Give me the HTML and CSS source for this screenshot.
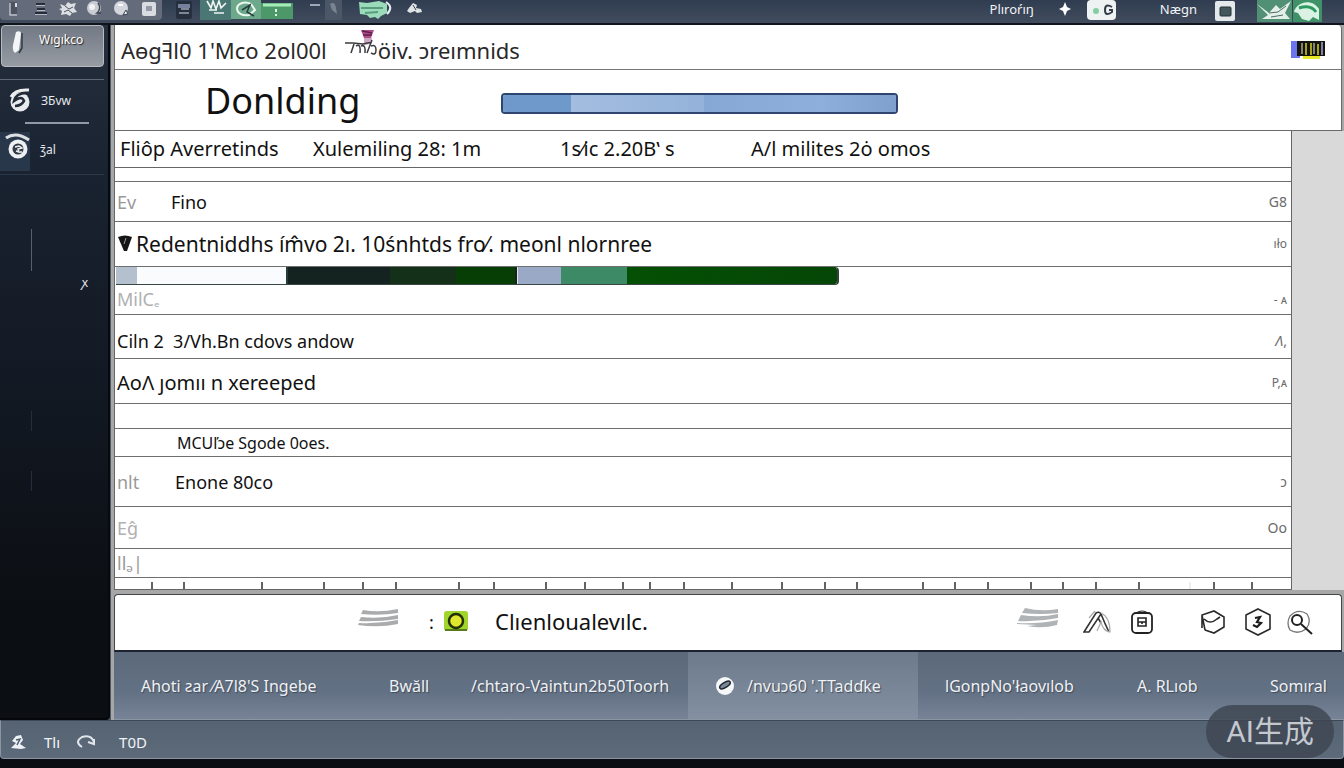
FILE: index.html
```
<!DOCTYPE html>
<html lang="en">
<head>
    <meta charset="UTF-8">
    <meta name="viewport" content="width=device-width, initial-scale=1.0">
    <title>Donlding</title>
    <link rel="stylesheet" href="styles.css">
</head>
<body>
    <header class="topbar">
        <div class="tools">
            <button class="tool" aria-label="Panel"><svg width="12" height="18" viewBox="0 0 12 18"><path d="M2 2h7v12H2z" fill="#4d5361"/><path d="M2 3v12h7" fill="none" stroke="#b9bec8" stroke-width="1.5"/><path d="M7 3h2v4H7z" fill="#d8dbe0"/></svg></button>
            <button class="tool" aria-label="List"><svg width="14" height="18" viewBox="0 0 14 18"><path d="M2 4h9M3 9h8M1 13h12" stroke="#262c38" stroke-width="2"/><path d="M2 5.500h9M3 10.500h8M1 14.500h12" stroke="#b5bac4"/></svg></button>
            <button class="tool" aria-label="Flower"><svg width="20" height="18" viewBox="0 0 20 18"><path d="M2 4l5 2 3-4 3 2 5-1-2 5 3 4-5 1-2 3-4-2-5 1 1-4-3-2 3-1z" fill="#dcdfe3"/><path d="M7 6l4 3 4-2M6 12l4-2 4 3" stroke="#4d5563" fill="none"/></svg></button>
            <button class="tool" aria-label="Disc"><svg width="18" height="18" viewBox="0 0 18 18"><circle cx="8" cy="8" r="7" fill="#c9ccd3"/><path d="M12 3a7 7 0 0 1-1 10h4" fill="none" stroke="#3b4250" stroke-width="1.500"/><circle cx="6" cy="7" r="3" fill="#f1f2f4"/></svg></button>
            <button class="tool" aria-label="Record"><svg width="18" height="18" viewBox="0 0 18 18"><circle cx="8" cy="8" r="7" fill="#d3d6dc"/><path d="M13 10l-3 5 5-1z" fill="#eef0f2" stroke="#3b4250"/><path d="M5 5h5" stroke="#fff" stroke-width="2"/></svg></button>
            <button class="tool" aria-label="Square"><svg width="16" height="18" viewBox="0 0 16 18"><rect x="1" y="2" width="14" height="14" rx="2" fill="#d9dce1"/><rect x="5" y="6" width="6" height="5" fill="#9399a6"/></svg></button>
        </div>
        <button class="tool tool-dark" aria-label="Page"><svg width="18" height="20" viewBox="0 0 18 20"><rect x="1" y="1" width="16" height="18" rx="2" fill="#252f3e"/><path d="M3 4h12v4H3z" fill="#75809a"/><path d="M6 9h8M4 13h10" stroke="#9ba5b5" stroke-width="1.500"/></svg></button>
        <svg class="badges" width="94" height="20" viewBox="0 0 94 20">
            <path d="M0 0h31v20H0z" fill="#4a7773"/><path d="M31 0h30v19H31z" fill="#6ca98b"/><path d="M61 3h32v16H61z" fill="#4d9868"/>
            <path d="M7 1l4 7 2-7 3 8 3-8 2 7 5-5M9 10h8M14 13h10" stroke="#f0f5f2" stroke-width="1.600" fill="none"/>
            <path d="M37 8c1-5 8-7 14-4l4 6-6 5c-6 1-12-1-12-7z" fill="none" stroke="#ecf8ef" stroke-width="2"/><path d="M42 10l8-5-3 7 7 4" fill="none" stroke="#263f3d" stroke-width="1.500"/>
            <path d="M63 5h28" stroke="#a5edb8" stroke-width="3"/><path d="M76 9v3M76 14v2" stroke="#def7e4" stroke-width="2"/>
        </svg>
        <svg class="marks" width="50" height="20" viewBox="0 0 50 20"><path d="M12 5h10" stroke="#9ca8b6" stroke-width="2"/><path d="M27 0h17v20H27z" fill="#4b5667"/><path d="M32 4q5-3 6 4l1 6-5-4z" fill="#7a8491"/></svg>
        <svg class="cloud" width="36" height="20" viewBox="0 0 36 20"><path d="M1 2l8 1 12-2 8 3v9l-6 3-3 3-3-2-5 1-3-3-7-1z" fill="#9adbb9"/><path d="M3 8h22M7 13l13-1" stroke="#5c9c7e" stroke-width="2"/><path d="M28 2q8 5 1 12" stroke="#e9eef2" stroke-width="2" fill="none"/></svg>
        <svg class="puff" width="18" height="18" viewBox="0 0 18 18"><path d="M3 8l4-5 4 2-1 3 5 1 1 3-5 1-2-2-5 2-3-2z" fill="#dfe3e6"/><path d="M7 5l3 5" stroke="#39424e"/></svg>
        <nav class="topnav">
            <a href="#">Plıroŕıŋ</a>
            <svg class="spark" width="12" height="14" viewBox="0 0 12 14"><path d="M6 0l2 5 4 2-4 2-2 5-2-5-4-2 4-2z" fill="#fff"/></svg>
            <button class="chip chip-wide" aria-label="Status"><svg width="29" height="20" viewBox="0 0 29 20"><rect width="29" height="20" rx="4" fill="#eef2f2"/><circle cx="9" cy="11" r="3" fill="#82cfa2"/><path d="M25 7q-7-4-7 3t7 2v-2h-3" fill="none" stroke="#353e48" stroke-width="2"/></svg></button>
            <a href="#">Nægn</a>
            <button class="chip" aria-label="Window"><svg width="20" height="20" viewBox="0 0 20 20"><rect width="20" height="20" rx="2" fill="#e4e8eb"/><rect x="5" y="6" width="11" height="9" rx="1" fill="#43565a" stroke="#273037"/></svg></button>
            <svg class="leaf" width="65" height="22" viewBox="0 0 65 22"><path d="M0 0h35v22H0z" fill="#529075"/><path d="M36 0h29v22H36z" fill="#3f9267"/><path d="M0 4l12 9 7-8 4 4 11-8-6 12 5 6H5l6-4z" fill="#e3efe8"/><path d="M12 13l9-1 8-6M14 17l12-2" stroke="#4b6d60" fill="none"/><path d="M37 12c2-9 17-15 25-3v11l-6-3-4 4-7-2-4-6z" fill="#d9f2e4"/><path d="M42 8q12-4 17 4" stroke="#2c9960" stroke-width="3" fill="none"/></svg>
        </nav>
    </header>

    <div class="workspace">
        <aside class="sidebar">
            <a class="side-item side-active" href="#">
                <svg width="16" height="26" viewBox="0 0 16 26"><path d="M5 2q5-2 5 2l-2 16-4 3q-3-3-2-8z" fill="#f4f5f6"/><path d="M11 3v15l-3 5" stroke="#333a44" stroke-width="1.500" fill="none"/></svg>
                <span>Wıgıkco</span>
            </a>
            <a class="side-item side-bevel" href="#">
                <svg width="22" height="26" viewBox="0 0 22 26"><circle cx="11" cy="14" r="9.500" fill="#e8ebee"/><path d="M20 5Q7 4 5 13q8-6 10 0-3 5-9 5" fill="none" stroke="#222b36" stroke-width="2.500"/><path d="M2 9Q6 1 20 2" stroke="#eceef0" stroke-width="3" fill="none"/></svg>
                <span>ꞫБvw</span>
            </a>
            <hr class="side-rule">
            <a class="side-item side-last" href="#">
                <svg width="30" height="40" viewBox="0 0 30 40"><path d="M0 0h30v39H0z" fill="#29374a"/><path d="M6 6Q16-1 29 8" stroke="#dbe0e5" stroke-width="3" fill="none"/><circle cx="18" cy="17" r="9.500" fill="#eef0f2"/><circle cx="18" cy="17" r="5.500" fill="#323b47"/><path d="M15 15l4-1 3 2-4 1 1 3-3-1M21 19v2" fill="none" stroke="#eef0f2" stroke-width="1.500"/></svg>
                <span>ʒ̄al</span>
            </a>
            <div class="side-note">
                <i class="scratch"></i>
                <span>ꭗ</span>
            </div>
            <i class="scratch scratch-low"></i>
            <i class="scratch scratch-low"></i>
        </aside>

        <main class="content">
            <section class="heading">
                <div class="crumbs">
                    <span>Aɵgꟻl0 1'Mco 2ol00l</span>
                    <svg class="sprig" width="34" height="30" viewBox="0 0 34 30"><path d="M17 2h13l-3 8h-7z" fill="#b04c8c"/><path d="M18 3l10 2M19 7h9" stroke="#5c2149" stroke-width="1.500"/><path d="M20 10h8l-1 6-7 1z" fill="#cba9c0"/><path d="M1 15h8l10 1 9-2M10 16l-3 9M12 18q5-3 4 7M17 18q5-2 4 7M28 12l-5 13M27 18q5-2 5 4t-5 3" stroke="#3a3a40" stroke-width="1.500" fill="none"/></svg>
                    <span>öiv. ɔreımnids</span>
                    <svg class="barcode" width="34" height="22" viewBox="0 0 34 22"><path d="M0 2h9v17H0z" fill="#6c75ee"/><path d="M12 17h17v3H12z" fill="#e9e928"/><path d="M6 2h28v15H6z" fill="#15150f"/><path d="M11 4v11M23 4v11" stroke="#a7a88d" stroke-width="1.500"/><path d="M15 4v12M20 4v12M27 5v11" stroke="#d5cf25" stroke-width="1.500"/><path d="M31 3v13" stroke="#8180a9" stroke-width="2"/></svg>
                </div>
                <div class="title-row">
                    <h1>Donlding</h1>
                    <div class="progress">
                        <i class="progress-done"></i>
                        <i class="progress-next"></i>
                        <i class="progress-rest"></i>
                    </div>
                </div>
            </section>

            <section class="sheet">
                <div class="meta">
                    <span>Fliôp Averretinds</span>
                    <span>Xulemiling 28: 1m</span>
                    <span>1s⁄ic 2.20B&#8219; s</span>
                    <span>A/l milites 2ȯ omos</span>
                </div>
                <table class="rows">
                    <colgroup>
                        <col class="col-tag">
                        <col>
                        <col class="col-val">
                    </colgroup>
                    <tr class="thin"><td colspan="3"></td></tr>
                    <tr class="r40"><td class="tag">Ev</td><td>Fino</td><td class="val">G8</td></tr>
                    <tr class="r45 group"><td colspan="2"><svg width="14" height="17" viewBox="0 0 14 17"><path d="M0 2q7-3 14 0L9 16H6z" fill="#151515"/><path d="M8 3l-2 6" stroke="#999"/></svg>Redentniddhs ím̂vo 2ı. 10śnhtds fro⁄. meonl nlornree</td><td class="val small">ıło</td></tr>
                    <tr class="track">
                        <td colspan="3">
                            <div class="meter">
                                <i class="m-start"></i>
                                <i class="m-blank"></i>
                                <i class="m-dark"></i>
                                <i class="m-pale"></i>
                                <i class="m-mint"></i>
                                <i class="m-green"></i>
                            </div>
                        </td>
                    </tr>
                    <tr class="r30"><td class="tag pale" colspan="2">MilC<small>ₑ</small></td><td class="val small">- ᴀ</td></tr>
                    <tr class="r44 low"><td colspan="2">Ciln 2&nbsp; 3/Vh.Bn cdovs andow</td><td class="val"><em>Λ</em>,</td></tr>
                    <tr class="r45 mid"><td colspan="2">AoΛ ȷomıı n xereeped</td><td class="val small">P,ᴀ</td></tr>
                    <tr class="r25"><td colspan="3"></td></tr>
                    <tr class="r28"><td></td><td class="sub">MCUľɔe Sɡode 0oes.</td><td></td></tr>
                    <tr class="r50"><td class="tag">nlt</td><td class="entry">Enone 80co</td><td class="val">ɔ</td></tr>
                    <tr class="r42"><td class="tag pale" colspan="2">Eɡ̂</td><td class="val">Oo</td></tr>
                    <tr class="r29"><td class="tag" colspan="2">llₔ|</td><td></td></tr>
                </table>
                <svg class="ruler" viewBox="0 0 1176 11" preserveAspectRatio="none">
                    <path d="M37 4v7M69 4v7M147 4v7M209 4v7M248 4v7M281 4v7M344 4v7M379 4v7M431 4v7M470 4v7M508 4v7M535 4v7M569 4v7M617 4v7M667 4v7M710 4v7M742 4v7M808 4v7M840 4v7M873 4v7M916 4v7M948 4v7M981 4v7M1024 4v7M1099 4v7M1137 4v7" stroke="#222" stroke-width="1.400"/>
                    <path d="M1075 4v7" stroke="#ddd"/>
                </svg>
            </section>

            <section class="actions">
                <svg class="stripes" width="41" height="20" viewBox="0 0 41 20"><path d="M5 2q16 3 35-1v4q-18 3-37 1zM3 9q20 2 37-2v4q-20 3-39 2zM1 15q20 1 39-3v4q-19 4-40 1z" fill="#a9abac"/></svg>
                <span class="colon">:</span>
                <button class="lime" aria-label="Active"><svg width="24" height="21" viewBox="0 0 24 21"><rect width="24" height="20" rx="3" fill="#a0d52d"/><path d="M1 19h22" stroke="#587c1d" stroke-width="2"/><circle cx="12" cy="10" r="7" fill="#dfe82d" stroke="#233006" stroke-width="2.500"/></svg></button>
                <span class="client">Clıenloualevılc.</span>
                <div class="action-icons">
                    <svg class="stripes" width="42" height="22" viewBox="0 0 42 22"><path d="M8 1q16 4 33 1v4q-18 2-36 0zM4 8q20 3 37-1v4q-20 4-40 3zM0 16q22 1 41-3l-1 5q-15 4-30 1l10-1-20-1z" fill="#b0b3b6"/></svg>
                    <button aria-label="Trace"><svg width="28" height="26" viewBox="0 0 28 26"><path d="M1 23L13 4q3-2 5 1L6 23zM18 5q4 10 8 18M15 9l3 5" fill="none" stroke="#333" stroke-width="1.600"/><path d="M18 4q9 4 9 19-7-1-9-10l-4 9M6 9l6-7" fill="none" stroke="#aaa" stroke-width="1.200"/></svg></button>
                    <button class="after-trace" aria-label="Save"><svg width="24" height="26" viewBox="0 0 24 26"><rect x="2" y="4" width="20" height="20" rx="4" fill="none" stroke="#222" stroke-width="1.800"/><path d="M6 4q6-4 12 0" fill="none" stroke="#222"/><path d="M8 9h8v8H8zM8 13h8M12 13v2" fill="none" stroke="#222" stroke-width="1.600"/></svg></button>
                    <button class="after-save" aria-label="Package"><svg width="26" height="26" viewBox="0 0 26 26"><path d="M2 19V6l12-4 10 6v10l-10 6-9-3M2 6l3 15M4 10q6 6 13 0l3-2" fill="none" stroke="#2a2a2a" stroke-width="1.600"/></svg></button>
                    <button class="after-box" aria-label="Token"><svg width="26" height="28" viewBox="0 0 26 28"><path d="M13 1l12 6v14l-12 6-12-6V7z" fill="none" stroke="#2a2a2a" stroke-width="1.600"/><path d="M10 10l5-1-3 5 4 1-4 4-4-2" fill="none" stroke="#1c1c1c" stroke-width="2.200"/></svg></button>
                    <button class="after-token" aria-label="Search"><svg width="28" height="28" viewBox="0 0 28 28"><path d="M4 8q8-8 17-2 5 8-1 15-8 6-16 1-4-7 0-14z" fill="none" stroke="#777" stroke-width="1.300"/><circle cx="11" cy="12" r="5" fill="none" stroke="#222" stroke-width="2"/><path d="M15 16l11 10" stroke="#222" stroke-width="2"/></svg></button>
                </div>
            </section>

            <nav class="tabs">
                <a href="#">Ahoti ƨar ⁄A7l8'S Ingebe</a>
                <a href="#">Bwăll</a>
                <a href="#">/chtaro-Vaintun2b50Toorh</a>
                <a class="active" href="#"><svg width="20" height="20" viewBox="0 0 20 20"><circle cx="10" cy="10" r="9" fill="#f5f7f9"/><ellipse cx="10" cy="9" rx="6" ry="2.500" transform="rotate(-32 10 9)" fill="#7c8797" stroke="#1e2630" stroke-width="1.500"/></svg>/nvuɔ60 '.TTadɗke</a>
                <a href="#">lGonpNo'łaovılob</a>
                <a href="#">A. RLıob</a>
                <a href="#">Somıral</a>
            </nav>
        </main>
    </div>

    <footer class="statusbar">
        <button aria-label="Edit"><svg width="18" height="18" viewBox="0 0 18 18"><path d="M2 8l4-5 5-1 2 5-3 4 6 4-5 1-10-1 5-5z" fill="#eef1f4"/><path d="M6 7l4-1-3 6" stroke="#4f5d6c" fill="none" stroke-width="1.500"/></svg></button>
        <button>Tlı</button>
        <button aria-label="Undo"><svg width="20" height="16" viewBox="0 0 20 16"><path d="M6 13q-8-5 0-10 9-3 12 5M12 8l6 2 0-5" fill="none" stroke="#e1e6eb" stroke-width="2"/></svg></button>
        <span>T0D</span>
    </footer>
    <div class="watermark">AI生成</div>
</body>
</html>
```
FILE: styles.css
```
* {
    box-sizing: border-box;
}
body {
    margin: 0;
    min-height: 100vh;
    display: flex;
    flex-direction: column;
    position: relative;
    background: #0a0d12;
    color: #111;
    font-family: "Noto Sans", "Noto Sans CJK SC", sans-serif;
    font-size: 18px;
}
a {
    color: inherit;
    text-decoration: none;
}
button {
    padding: 0;
    border: none;
    background: none;
    color: inherit;
    font: inherit;
    cursor: pointer;
}
svg {
    display: block;
    flex: none;
}

/* top bar */
.topbar {
    display: flex;
    align-items: flex-start;
    height: 25px;
    background: linear-gradient(#303d50, #414c5e);
    border-bottom: 2px solid #10141d;
    color: #f0f2f5;
    overflow: hidden;
}
.tools {
    display: flex;
    width: 162px;
    height: 20px;
    background: #646b7b;
    border-radius: 0 0 4px 4px;
}
.tool {
    width: 27px;
    display: flex;
    justify-content: center;
}
.tool-dark {
    margin-left: 8px;
}
.badges {
    margin-left: 3px;
}
.marks {
    margin-left: 4px;
}
.cloud {
    margin-left: 10px;
}
.puff {
    margin-left: 12px;
}
.topnav {
    display: flex;
    align-items: flex-start;
    margin-left: auto;
    margin-right: 22px;
    font-size: 13px;
    line-height: 18px;
}
.spark {
    margin: 2px 16px 0 25px;
}
.chip {
    margin: 1px 22px 0 18px;
}
.chip-wide {
    margin: 0 44px 0 0;
}

/* sidebar */
.workspace {
    display: flex;
    flex: 1;
    background: #4d5967;
}
.sidebar {
    width: 110px;
    flex: none;
    padding-right: 4px;
    background: linear-gradient(#252f3d, #192230 22%, #121822 55%, #0b0e12 85%);
    border-right: 2px solid #07090d;
    border-bottom: 2px solid #05070a;
    border-radius: 0 0 4px 0;
    color: #e5e8eb;
    font-size: 12px;
}
.side-item {
    display: flex;
    align-items: center;
    gap: 10px;
    padding-left: 9px;
}
.side-active {
    height: 42px;
    margin-left: 1px;
    align-items: flex-start;
    padding-top: 4px;
    gap: 12px;
    background: linear-gradient(#727985, #979ca3);
    border: 1px solid #b7bbc0;
    border-radius: 4px;
    color: #fff;
    text-shadow: 1px 1px 1px #222;
}
.side-active span {
    padding-top: 1px;
}
.side-bevel {
    height: 42px;
    margin-top: 12px;
    border-top: 1px solid #5d6977;
}
.side-rule {
    width: 64px;
    margin: 1px 0 0 25px;
    border: none;
    border-top: 2px solid #8f9aa6;
}
.side-last {
    margin-top: 8px;
    padding-left: 0;
    padding-bottom: 2px;
    border-bottom: 1px solid #2c3847;
}
.side-last span {
    padding-bottom: 6px;
}
.side-note {
    display: flex;
    justify-content: space-between;
    align-items: flex-end;
    height: 62px;
    margin: 54px 16px 0 31px;
}
.scratch {
    display: block;
    align-self: flex-start;
    width: 1px;
    height: 42px;
    background: #53606d;
}
.scratch-low {
    height: 20px;
    margin: 120px 0 -80px 31px;
    background: #252e3a;
}

/* main column */
.content {
    flex: 1;
    min-width: 0;
    margin-left: 1px;
    padding-left: 3px;
    background: #a5a7a9;
}
.heading {
    margin-right: 2px;
    background: #fff;
    border: 1px solid #6a6a6a;
    border-top: none;
    border-radius: 0 4px 0 0;
}
.crumbs {
    display: flex;
    align-items: center;
    height: 45px;
    padding: 5px 16px 0 6px;
    border-bottom: 1px solid #777;
    font-size: 22px;
    color: #292929;
}
.sprig {
    margin: -14px 0 0 17px;
}
.barcode {
    margin-left: auto;
}
.title-row {
    display: flex;
    align-items: center;
    height: 60px;
    padding: 2px 0 0 90px;
}
h1 {
    width: 296px;
    margin: 0;
    font-size: 36px;
    font-weight: 400;
    line-height: 48px;
}
.progress {
    display: flex;
    width: 397px;
    height: 21px;
    margin-top: 4px;
    border: 2px solid #2d456f;
    border-radius: 4px;
    overflow: hidden;
}
.progress-done {
    flex: 68;
    background: #6e99ca;
}
.progress-next {
    flex: 134;
    background: linear-gradient(90deg, #a3bddf, #94b2da);
}
.progress-rest {
    flex: 193;
    background: linear-gradient(90deg, #86a8d4, #8eaedb 60%, #7f9fcd);
}

/* sheet */
.sheet {
    margin-right: 52px;
    background: #fff;
    border: 1px solid #666;
    border-top: none;
    box-shadow: 52px 0 0 #d9d9d9;
}
.meta {
    display: grid;
    grid-template-columns: 193fr 247fr 191fr 540fr;
    height: 37px;
    padding-left: 5px;
    align-items: center;
    border-bottom: 1px solid #666;
    font-size: 20px;
    line-height: 24px;
}
.rows {
    width: 100%;
    border-spacing: 0;
    table-layout: fixed;
}
.col-tag {
    width: 54px;
}
.col-val {
    width: 60px;
}
.rows td {
    padding: 0 0 0 2px;
    border-bottom: 1px solid #6f6f6f;
    line-height: 20px;
    white-space: nowrap;
}
.rows .val {
    padding-right: 4px;
    text-align: right;
    font-size: 14px;
    color: #6b6b6b;
}
.rows .small {
    font-size: 12px;
}
.rows .tag {
    color: #999;
}
.rows .pale {
    color: #b0b0b0;
}
.thin { height: 14px; }
.r25 { height: 25px; }
.r28 { height: 28px; }
.r29 { height: 29px; }
.r30 { height: 30px; }
.r40 { height: 40px; }
.r42 { height: 42px; }
.r44 { height: 44px; }
.r45 { height: 45px; }
.r50 { height: 50px; }
.group td {
    font-size: 21px;
}
.group svg {
    display: inline-block;
    margin: 0 4px 0 1px;
}
.rows .track td {
    padding: 0 0 0 1px;
    border-bottom: none;
}
.low td {
    padding-top: 8px;
}
.mid td {
    padding-top: 4px;
    font-size: 20px;
}
.rows .sub {
    padding-left: 8px;
    font-size: 16px;
}
.rows .entry {
    padding-left: 6px;
}
.meter {
    display: flex;
    width: 723px;
    max-width: 100%;
    height: 18px;
    border-bottom: 1px solid #384644;
    border-right: 2px solid #34413d;
    border-radius: 0 4px 4px 0;
    overflow: hidden;
}
.m-start {
    flex: 21;
    background: #b4c0cd;
}
.m-blank {
    flex: 150;
    background: #fafbfc;
}
.m-dark {
    flex: 229;
    background: linear-gradient(90deg, #14231f 45%, #153018 45%, #153018 74%, #073e05 74%);
    border-left: 2px solid #263b3a;
    border-right: 2px solid #162319;
}
.m-pale {
    flex: 43;
    background: #9aaac6;
    border-left: 1px solid #dfe5ec;
}
.m-mint {
    flex: 67;
    background: #3d8b66;
}
.m-green {
    flex: 211;
    background: linear-gradient(90deg, #045004, #054606);
}
.ruler {
    width: 100%;
    height: 11px;
}

/* client bar */
.actions {
    display: flex;
    align-items: center;
    height: 58px;
    margin: 4px 2px 0 0;
    padding: 0 27px 3px 243px;
    background: #fff;
    border: 1px solid #444;
    border-bottom: 2px solid #1b2230;
    border-radius: 4px 4px 0 0;
}
.colon {
    width: 8px;
    margin: 2px 7px 0 30px;
}
.stripes {
    margin-top: -6px;
}
.client {
    margin-left: 27px;
    font-size: 22px;
}
.action-icons {
    display: flex;
    align-items: center;
    margin-left: auto;
}
.action-icons button {
    margin: 2px 0 0 24px;
}
.action-icons .after-trace {
    margin-left: 19px;
}
.action-icons .after-save {
    margin-left: 46px;
}
.action-icons .after-box {
    margin-left: 19px;
}
.action-icons .after-token {
    margin-left: 15px;
}

/* tabs */
.tabs {
    display: grid;
    grid-template-columns: 248fr 82fr 244fr 230fr 192fr 133fr 101fr;
    height: 68px;
    background: linear-gradient(#5b697b, #637184 60%, #778396);
    border-bottom: 1px solid #8c96a3;
    color: #eef1f5;
    font-size: 16px;
}
.tabs a {
    display: flex;
    align-items: center;
    gap: 12px;
    min-width: 0;
    padding-left: 27px;
    white-space: nowrap;
    text-shadow: 1px 1px 1px #414c5b;
}
.tabs .active {
    background: linear-gradient(#6c7a8b, #8390a1);
}

/* status bar */
.statusbar {
    display: flex;
    align-items: center;
    height: 39px;
    margin-bottom: 9px;
    padding: 4px 0 0 9px;
    background: linear-gradient(#556372, #5d6a7a);
    border: 1px solid #8a95a1;
    border-top-color: #3c4856;
    border-radius: 0 0 4px 4px;
    color: #f0f3f5;
    font-size: 15px;
}
.statusbar button {
    margin-right: 16px;
}
.statusbar span {
    margin-left: 7px;
}
.watermark {
    position: absolute;
    right: 10px;
    bottom: 10px;
    padding: 0 20px;
    border-radius: 27px;
    background: rgba(62, 70, 82, 0.85);
    color: #c3c8cf;
    font-family: Roboto, "Noto Sans CJK SC", sans-serif;
    font-size: 30px;
    line-height: 53px;
}
```
